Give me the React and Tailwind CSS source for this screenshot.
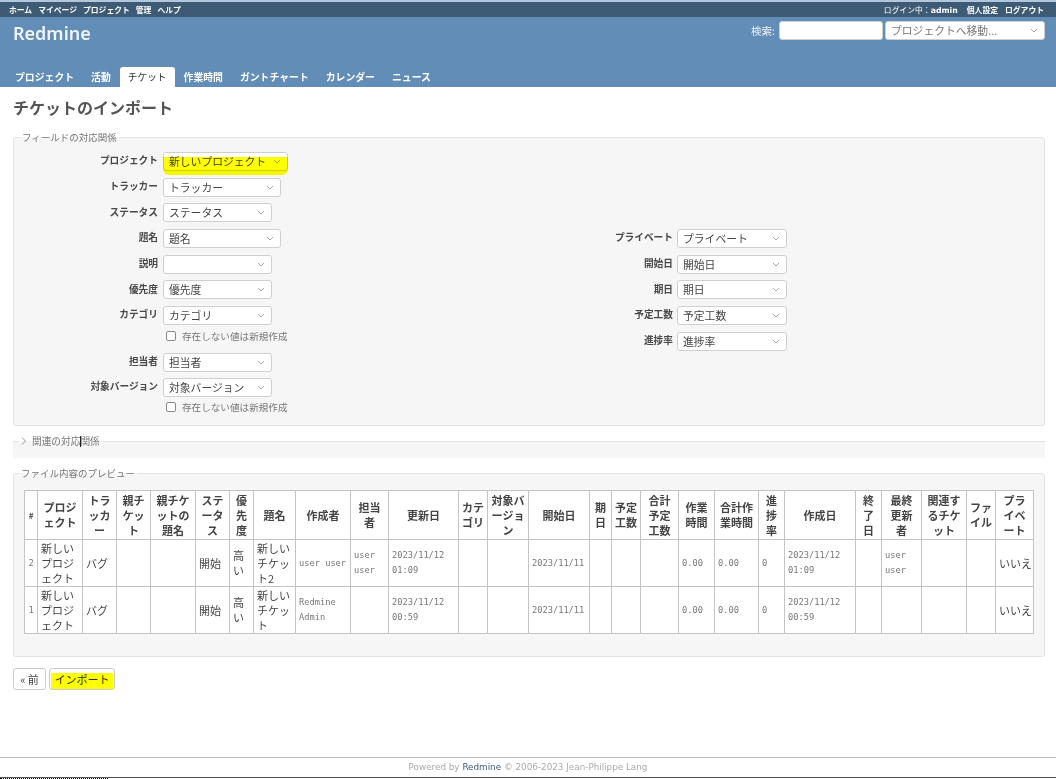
const CJK = "font-['Noto_Sans_CJK_JP','Noto_Sans',sans-serif]";

function Chevron() {
  return (
    <svg width="8" height="5" viewBox="0 0 8 5" className="shrink-0" fill="none" stroke="#a8a8a8" strokeWidth="1">
      <path d="M1 1 L4 4 L7 1" />
    </svg>
  );
}

function Select({ text, w, marked }) {
  return (
    <div className={`relative flex h-[19px] ${w} items-center justify-between rounded-[3px] border border-[#cfcfcf] bg-white pl-[5px] pr-[6px] text-[10.8px] leading-[17px] text-[#444]`}>
      <span className="whitespace-nowrap">{text}</span>
      <Chevron />
      {marked && <span className="absolute -left-px -right-px top-[4px] h-[18px] rounded-b-[6px] bg-[#ffff00] mix-blend-multiply" />}
    </div>
  );
}

function Field({ label, w, text, marked, row = "h-[25.67px]", labelW = "w-[145px] pr-[1px]" }) {
  return (
    <div className={`flex ${row} items-start`}>
      <div className={`${labelW} flex h-[17px] shrink-0 items-center justify-end text-[9.7px] font-bold text-[#484848]`}>{label}</div>
      <div className="ml-[4px]"><Select text={text} w={w} marked={marked} /></div>
    </div>
  );
}

function CreateMissing({ row }) {
  return (
    <div className={`flex ${row} items-start pl-[152px] text-[9.6px] leading-[13px] text-[#777]`}>
      <span className="h-[10px] w-[10px] translate-y-[1px] rounded-[2px] border border-[#8a8a8a] bg-white" />
      <span className="ml-[6px]">存在しない値は新規作成</span>
    </div>
  );
}

const widths = ["w-[13px]","w-[45px]","w-[34px]","w-[34px]","w-[45px]","w-[34px]","w-[24px]","w-[42px]","w-[55px]","w-[38px]","w-[70px]","w-[29px]","w-[41px]","w-[61px]","w-[22px]","w-[29px]","w-[38px]","w-[36px]","w-[44px]","w-[26px]","w-[71px]","w-[26px]","w-[40px]","w-[45px]","w-[29px]","w-[38px]"];

const head = ["#","プロジ\nェクト","トラ\nッカ\nー","親チ\nケッ\nト","親チケ\nットの\n題名","ステ\nータ\nス","優\n先\n度","題名","作成者","担当\n者","更新日","カテ\nゴリ","対象バ\nージョ\nン","開始日","期\n日","予定\n工数","合計\n予定\n工数","作業\n時間","合計作\n業時間","進\n捗\n率","作成日","終\n了\n日","最終\n更新\n者","関連す\nるチケ\nット","ファ\nイル","プラ\nイベ\nート"];

const rows = [
  ["2","新しい\nプロジ\nェクト","バグ","","","開始","高\nい","新しい\nチケッ\nト2","user user","user\nuser","2023/11/12\n01:09","","","2023/11/11","","","","0.00","0.00","0","2023/11/12\n01:09","","user\nuser","","","いいえ"],
  ["1","新しい\nプロジ\nェクト","バグ","","","開始","高\nい","新しい\nチケッ\nト","Redmine\nAdmin","","2023/11/12\n00:59","","","2023/11/11","","","","0.00","0.00","0","2023/11/12\n00:59","","","","","いいえ"],
];

const isMono = (s) => /^[\x00-\x7f]*$/.test(s);

function Tab({ children, active }) {
  return (
    <a className={active
      ? "rounded-t-[3px] bg-white px-[8px] text-[9.7px] font-normal leading-[20px] text-[#333]"
      : "px-[8px] text-[9.85px] font-bold leading-[20px] text-white"}>{children}</a>
  );
}

export default function App() {
  return (
    <div className={`flex h-[779px] w-[1056px] flex-col overflow-hidden bg-white ${CJK} text-[#333]`}>
      <div className="flex h-[17px] shrink-0 items-center justify-between border-t-2 border-[#b4c6da] bg-[#3e5b76] pl-[9px] pr-[12px] text-[7.8px] font-bold leading-[15px] text-white">
        <div className="flex gap-[6px]">
          <a>ホーム</a><a>マイページ</a><a>プロジェクト</a><a>管理</a><a>ヘルプ</a>
        </div>
        <div className="flex gap-[7px]">
          <span className="mr-[2px] font-normal">ログイン中：<b className="font-['DejaVu_Sans',sans-serif] font-bold">admin</b></span>
          <a>個人設定</a><a>ログアウト</a>
        </div>
      </div>

      <header className="flex h-[70px] shrink-0 flex-col justify-between bg-[#628db6]">
        <div className="flex items-start justify-between pl-[13px] pr-[11px]">
          <h1 className="mt-[3px] font-['Noto_Sans',sans-serif] text-[18px] font-semibold leading-[27px] text-[#f0f4f8]">Redmine</h1>
          <div className="mt-[4px] flex h-[19px] items-center text-[10.5px] text-[#f0f4f8]">
            <span>検索:</span>
            <div className="ml-[4px] h-[19px] w-[104px] rounded-[3px] border border-[#cfcfcf] bg-white" />
            <div className="ml-[2px]"><Select text={<span className="text-[#777]">プロジェクトへ移動...</span>} w="w-[160px]" /></div>
          </div>
        </div>
        <nav className="flex gap-[1px] pl-[7px]">
          <Tab>プロジェクト</Tab><Tab>活動</Tab><Tab active>チケット</Tab><Tab>作業時間</Tab><Tab>ガントチャート</Tab><Tab>カレンダー</Tab><Tab>ニュース</Tab>
        </nav>
      </header>

      <main className="flex min-h-0 flex-1 flex-col px-[11px] pl-[13px]">
        <h2 className="mt-[9px] text-[16px] font-bold leading-[22px] text-[#555]">チケットのインポート</h2>

        <fieldset className="mt-[12px] h-[296px] rounded-[3px] border border-[#e4e4e4] bg-[#f6f6f6]">
          <legend className="ml-[6px] px-[2px] text-[9.5px] leading-[14px] text-[#777]">フィールドの対応関係</legend>
          <div className="pt-[8px]">
            <Field label="プロジェクト" w="w-[125px]" text="新しいプロジェクト" marked />
            <Field label="トラッカー" w="w-[118px]" text="トラッカー" />
            <Field label="ステータス" w="w-[109px]" text="ステータス" />
            <div className="flex">
              <div className="w-[514px] shrink-0">
                <Field label="題名" w="w-[118px]" text="題名" />
                <Field label="説明" w="w-[109px]" text="" />
                <Field label="優先度" w="w-[109px]" text="優先度" />
                <Field label="カテゴリ" w="w-[109px]" text="カテゴリ" row="h-[24px]" />
                <CreateMissing row="h-[23px]" />
                <Field label="担当者" w="w-[109px]" text="担当者" row="h-[25px]" />
                <Field label="対象バージョン" w="w-[109px]" text="対象バージョン" row="h-[23px]" />
                <CreateMissing row="h-[14px]" />
              </div>
              <div>
                <Field labelW="w-[145px]" label="プライベート" w="w-[110px]" text="プライベート" />
                <Field labelW="w-[145px]" label="開始日" w="w-[110px]" text="開始日" />
                <Field labelW="w-[145px]" label="期日" w="w-[110px]" text="期日" />
                <Field labelW="w-[145px]" label="予定工数" w="w-[110px]" text="予定工数" />
                <Field labelW="w-[145px]" label="進捗率" w="w-[110px]" text="進捗率" />
              </div>
            </div>
          </div>
        </fieldset>

        <fieldset className="relative mt-[8px] h-[24px] border-t border-[#e4e4e4] bg-[#f6f6f6]">
          <legend className="ml-[6px] flex items-center px-[2px] text-[9.7px] leading-[14px] text-[#777]">
            <svg width="6" height="8" viewBox="0 0 6 8" fill="none" stroke="#999" strokeWidth="1" className="mr-[5px]"><path d="M1 0.5 L4.5 4 L1 7.5" /></svg>
            <span className="relative">関連の対応関係<span className="absolute left-[48px] top-[2px] h-[11px] w-px bg-[#222]" /></span>
          </legend>
        </fieldset>

        <fieldset className="mt-[8px] rounded-[3px] border border-[#e4e4e4] bg-[#f6f6f6] pb-[22px] pl-[10px] pr-[10px]">
          <legend className="ml-[-5px] px-[2px] text-[9.5px] leading-[14px] text-[#777]">ファイル内容のプレビュー</legend>
          <table className="mt-[10px] w-[1009px] table-fixed border-collapse bg-white text-[11px]">
            <colgroup>{widths.map((w, i) => <col key={i} className={w} />)}</colgroup>
            <thead>
              <tr className="h-[49px]">
                {head.map((h, i) => (
                  <th key={i} className={`whitespace-pre border border-[#c4c4c4] p-0 text-center align-middle text-[#444] ${i === 0 ? "text-[8px]" : "text-[11px]"} font-bold leading-[15px]`}>{h}</th>
                ))}
              </tr>
            </thead>
            <tbody>
              {rows.map((r, ri) => (
                <tr key={ri} className="h-[47px]">
                  {r.map((c, i) => (
                    <td key={i} className={`whitespace-pre border border-[#c4c4c4] px-[3px] py-0 align-middle leading-[15px] ${isMono(c) ? "font-['DejaVu_Sans_Mono',monospace] text-[8.7px] text-[#777]" : "text-[#444]"} ${i === 0 ? "text-center" : "text-left"}`}>{c}</td>
                  ))}
                </tr>
              ))}
            </tbody>
          </table>
        </fieldset>

        <div className="mt-[11px] flex gap-[3px] text-[11px]">
          <div className="flex h-[22px] w-[33px] items-center justify-center rounded-[3px] border border-[#ccc] bg-white text-[#444]">« 前</div>
          <div className="relative flex h-[22px] w-[66px] items-center justify-center rounded-[3px] border border-[#ccc] bg-white text-[#333]">
            インポート
            <span className="absolute left-[1px] right-[1px] top-[4px] h-[16px] bg-[#ffff00] mix-blend-multiply" />
          </div>
        </div>
      </main>

      <footer className="flex h-[20px] shrink-0 items-center justify-center border-t border-[#bbb] font-['DejaVu_Sans',sans-serif] text-[8.8px] text-[#aaa]">
        <span>Powered by <a className="text-[#3e5b76]">Redmine</a> © 2006-2023 Jean-Philippe Lang</span>
      </footer>
      <div className="h-[2px] shrink-0 border-t border-[#555] bg-white">
        <div className="h-px w-[108px] border-t border-dotted border-black" />
      </div>
    </div>
  );
}
